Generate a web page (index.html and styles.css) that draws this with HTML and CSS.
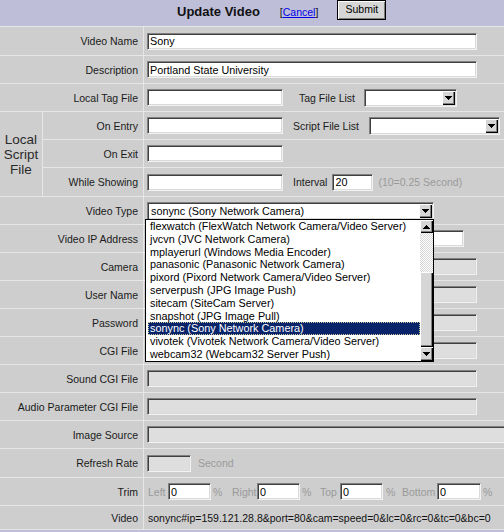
FILE: index.html
```html
<!DOCTYPE html>
<html lang="en">
<head>
<meta charset="utf-8">
<title>Update Video</title>
<link rel="stylesheet" href="styles.css">
</head>
<body>
<form class="page">
  <div class="grid">
    <div class="cell head">
      <span class="title">Update Video</span>
      <span class="cancel">[<a href="#">Cancel</a>]</span>
      <button type="button" class="btn">Submit</button>
    </div>

    <div class="cell label">Video Name</div>
    <div class="cell field"><input class="txt w330" value="Sony"></div>

    <div class="cell label">Description</div>
    <div class="cell field"><input class="txt w330" value="Portland State University"></div>

    <div class="cell label">Local Tag File</div>
    <div class="cell field">
      <input class="txt w136">
      <span class="inl ml16">Tag File List</span>
      <div class="select w93 ml9"><span class="select-text"></span><span class="drop-btn"><svg width="7" height="4" viewBox="0 0 7 4"><path d="M0 0h7v1H0zM1 1h5v1H1zM2 2h3v1H2zM3 3h1v1H3z" fill="#000"/></svg></span></div>
    </div>

    <div class="cell group">Local<br>Script<br>File</div>
    <div class="cell sublabel">On Entry</div>
    <div class="cell field">
      <input class="txt w136">
      <span class="inl ml10">Script File List</span>
      <div class="select w131 ml10"><span class="select-text"></span><span class="drop-btn"><svg width="7" height="4" viewBox="0 0 7 4"><path d="M0 0h7v1H0zM1 1h5v1H1zM2 2h3v1H2zM3 3h1v1H3z" fill="#000"/></svg></span></div>
    </div>

    <div class="cell sublabel">On Exit</div>
    <div class="cell field"><input class="txt w136"></div>

    <div class="cell sublabel">While Showing</div>
    <div class="cell field">
      <input class="txt w136">
      <span class="inl ml10">Interval</span>
      <input class="txt w41 ml5" value="20">
      <span class="inl note ml5">(10=0.25 Second)</span>
    </div>

    <div class="cell label">Video Type</div>
    <div class="cell field">
      <div class="select w287"><span class="select-text">sonync (Sony Network Camera)</span><span class="drop-btn"><svg width="7" height="4" viewBox="0 0 7 4"><path d="M0 0h7v1H0zM1 1h5v1H1zM2 2h3v1H2zM3 3h1v1H3z" fill="#000"/></svg></span></div>
    </div>

    <div class="cell label">Video IP Address</div>
    <div class="cell field"><input class="txt w317"></div>

    <div class="cell label">Camera</div>
    <div class="cell field"><input class="txt off w330" disabled></div>

    <div class="cell label">User Name</div>
    <div class="cell field"><input class="txt off w330" disabled></div>

    <div class="cell label">Password</div>
    <div class="cell field"><input class="txt off w330" disabled></div>

    <div class="cell label">CGI File</div>
    <div class="cell field"><input class="txt off w330" disabled></div>

    <div class="cell label">Sound CGI File</div>
    <div class="cell field"><input class="txt off w330" disabled></div>

    <div class="cell label">Audio Parameter CGI File</div>
    <div class="cell field"><input class="txt off w330" disabled></div>

    <div class="cell label">Image Source</div>
    <div class="cell field clip"><input class="txt off wfull" disabled></div>

    <div class="cell label">Refresh Rate</div>
    <div class="cell field">
      <input class="txt off w44" disabled>
      <span class="inl note ml7">Second</span>
    </div>

    <div class="cell label">Trim</div>
    <div class="cell field trim">
      <span class="note t-left">Left</span>
      <input class="txt w43" value="0">
      <span class="note t-pct1">%</span>
      <span class="note t-right">Right</span>
      <input class="txt w43" value="0">
      <span class="note t-pct2">%</span>
      <span class="note t-top">Top</span>
      <input class="txt w43" value="0">
      <span class="note t-pct3">%</span>
      <span class="note t-bottom">Bottom</span>
      <input class="txt w44" value="0">
      <span class="note t-pct4">%</span>
    </div>

    <div class="cell label">Video</div>
    <div class="cell field"><span class="url">sonync#ip=159.121.28.8&amp;port=80&amp;cam=speed=0&amp;lc=0&amp;rc=0&amp;tc=0&amp;bc=0</span></div>

    <div class="cell foot"></div>
  </div>

  <div class="listbox">
    <ul class="options">
      <li>flexwatch (FlexWatch Network Camera/Video Server)</li>
      <li>jvcvn (JVC Network Camera)</li>
      <li>mplayerurl (Windows Media Encoder)</li>
      <li>panasonic (Panasonic Network Camera)</li>
      <li>pixord (Pixord Network Camera/Video Server)</li>
      <li>serverpush (JPG Image Push)</li>
      <li>sitecam (SiteCam Server)</li>
      <li>snapshot (JPG Image Pull)</li>
      <li class="sel">sonync (Sony Network Camera)</li>
      <li>vivotek (Vivotek Network Camera/Video Server)</li>
      <li>webcam32 (Webcam32 Server Push)</li>
    </ul>
    <div class="vscroll">
      <span class="sb-btn sb-up"><svg width="7" height="4" viewBox="0 0 7 4"><path d="M3 0h1v1H3zM2 1h3v1H2zM1 2h5v1H1zM0 3h7v1H0z" fill="#000"/></svg></span>
      <span class="sb-track"></span>
      <span class="sb-thumb"></span>
      <span class="sb-btn sb-down"><svg width="7" height="4" viewBox="0 0 7 4"><path d="M0 0h7v1H0zM1 1h5v1H1zM2 2h3v1H2zM3 3h1v1H3z" fill="#000"/></svg></span>
    </div>
  </div>
</form>
</body>
</html>
```

FILE: styles.css
```css
* { box-sizing: border-box; }
html, body { margin: 0; padding: 0; overflow: hidden; }
body {
  background: #cecece;
  font-family: "Liberation Sans", Arial, sans-serif;
  font-size: 10.5px;
  color: #1a1a1a;
}
.page { position: relative; width: 504px; margin: 0; }

.grid {
  display: grid;
  grid-template-columns: 42px 100px 360px;
  grid-template-rows: 26px 28px 27px 27px 27px 27px 28px 27px 27px 27px 27px 27px 27px 27px 27px 27px 28px 27px 23px 10px;
  gap: 1px;
  background: #e6e6e6;
}
.cell {
  background: #cecece;
  display: flex;
  align-items: center;
  min-width: 0;
  white-space: nowrap;
}
.clip { overflow: hidden; }
.head {
  grid-column: 1 / 4;
  background: #bebed9;
  align-items: flex-start;
  padding-left: 177px;
}
.title { font-weight: bold; font-size: 13px; line-height: 15px; margin-top: 4px; color: #111; }
.cancel { margin-left: 20px; margin-top: 6px; font-size: 10.5px; line-height: 12px; color: #111; }
.cancel a { color: #0000e6; text-decoration: underline; }
.btn {
  margin-left: 19px;
  margin-top: 0;
  width: 49px;
  height: 20px;
  padding: 0 0 2px;
  border: 1px solid #000;
  background: #d6d6d6;
  box-shadow: inset 1px 1px 0 #fff, inset -1px -1px 0 #7c7c7c;
  font-family: inherit;
  font-size: 10.5px;
  color: #000;
}
.foot { grid-column: 1 / 4; background: #bebed9; }

.label { grid-column: 1 / 3; justify-content: flex-end; padding-right: 5px; }
.sublabel { grid-column: 2; justify-content: flex-end; padding-right: 5px; }
.group {
  grid-column: 1;
  grid-row: span 3;
  justify-content: center;
  text-align: center;
  font-size: 13.5px;
  line-height: 15px;
  color: #2a2a2a;
  white-space: normal;
}
.field { grid-column: 3; padding-left: 3px; }

.txt {
  flex: none;
  height: 17px;
  margin: 0;
  padding: 0 2px;
  border: 1px solid;
  border-color: #808080 #f2f2f2 #f2f2f2 #808080;
  box-shadow: inset 1px 1px 0 #404040, inset -1px -1px 0 #dadada;
  background: #fff;
  font-family: inherit;
  font-size: 10.8px;
  color: #000;
  outline: none;
}
.txt.off { background: #dedede; }
.w330 { width: 330px; }
.w136 { width: 136px; }
.w41 { width: 41px; }
.w43 { width: 43px; }
.w44 { width: 44px; }
.w317 { width: 317px; }
.wfull { width: 380px; }
.w93 { width: 93px; }
.w131 { width: 131px; }
.w287 { width: 287px; }
.ml5 { margin-left: 5px; }
.ml7 { margin-left: 7px; }
.ml9 { margin-left: 9px; }
.ml10 { margin-left: 10px; }
.ml16 { margin-left: 16px; }
.inl { color: #1a1a1a; }
.note { color: #9a9a9a; }

.select {
  flex: none;
  display: flex;
  height: 18px;
  padding: 1px;
  border: 1px solid;
  border-color: #808080 #f2f2f2 #f2f2f2 #808080;
  box-shadow: inset 1px 1px 0 #404040, inset -1px -1px 0 #dadada;
  background: #fff;
}
.select-text { flex: 1; padding-left: 2px; font-size: 10.8px; line-height: 14px; color: #000; overflow: hidden; }
.drop-btn, .sb-btn {
  display: flex;
  align-items: center;
  justify-content: center;
  width: 13px;
  background: #d6d6d6;
  box-shadow: inset 1px 1px 0 #fff, inset -1px -1px 0 #000, inset -2px -2px 0 #808080;
}
.drop-btn svg, .sb-btn svg { display: block; }

.trim .t-left { margin-left: 1px; width: 20px; }
.trim .t-pct1 { margin-left: 2px; width: 19px; }
.trim .t-right { width: 25px; }
.trim .t-pct2 { margin-left: 2px; width: 18px; }
.trim .t-top { width: 20px; }
.trim .t-pct3 { margin-left: 3px; width: 16px; }
.trim .t-bottom { width: 35px; }
.trim .t-pct4 { margin-left: 2px; }
.url { margin-left: 1px; color: #111; }

.listbox {
  position: absolute;
  left: 145px;
  top: 219px;
  width: 289px;
  height: 143px;
  border: 1px solid #000;
  background: #fff;
  display: flex;
}
.options {
  list-style: none;
  margin: 0 0 0 2px;
  padding: 0;
  width: 272px;
  overflow: hidden;
}
.options li {
  height: 12.8px;
  line-height: 12.8px;
  padding-left: 2px;
  font-size: 10.85px;
  color: #000;
  white-space: nowrap;
}
.options li.sel {
  background: #0a246a;
  color: #fff;
  outline: 1px dotted #c9c9a0;
  outline-offset: -1px;
}
.vscroll { width: 13px; display: flex; flex-direction: column; }
.sb-up { height: 13px; }
.sb-track {
  height: 39px;
  background: repeating-conic-gradient(#d6d6d6 0 25%, #fff 0 50%) 0 0 / 2px 2px;
}
.sb-thumb {
  height: 75px;
  background: #d6d6d6;
  box-shadow: inset 1px 1px 0 #fff, inset -1px -1px 0 #000, inset -2px -2px 0 #808080;
}
.sb-down { height: 14px; }
```
